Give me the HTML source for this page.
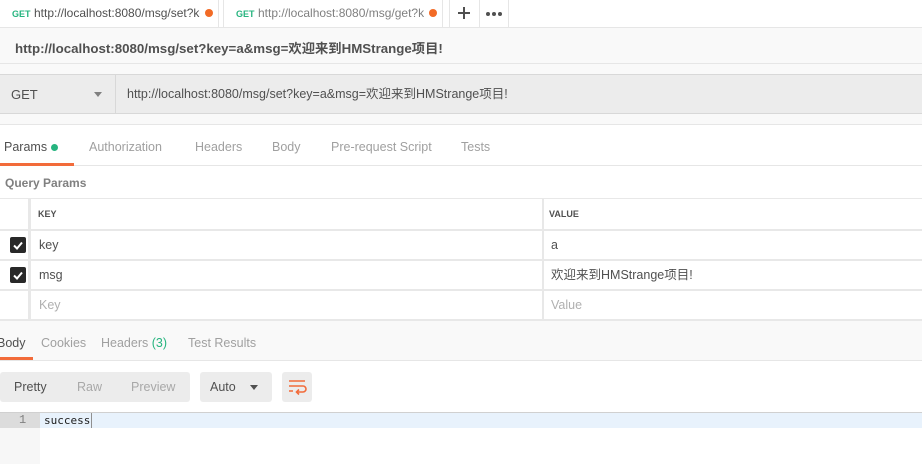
<!DOCTYPE html>
<html><head><meta charset="utf-8"><style>
*{margin:0;padding:0;box-sizing:border-box}
body{width:922px;height:464px;overflow:hidden;background:#fff;font-family:"Liberation Sans","Noto Sans CJK SC",sans-serif;font-size:12px;color:#505050;position:relative}
.a{position:absolute;line-height:15px}
.t{white-space:nowrap}
</style></head><body>
<div class="a" style="left:0;top:0;width:922px;height:28px;background:#fff;border-bottom:1px solid #e6e6e6"></div>
<div class="a" style="left:218px;top:0;width:1px;height:27px;background:#e6e6e6"></div>
<div class="a" style="left:223px;top:0;width:220px;height:27px;border-left:1px solid #e6e6e6;border-right:1px solid #e6e6e6"></div>
<div class="a" style="left:449px;top:0;width:60px;height:27px;border-left:1px solid #e6e6e6;border-right:1px solid #e6e6e6"></div>
<div class="a" style="left:479px;top:0;width:1px;height:27px;background:#e6e6e6"></div>
<div class="a t" style="left:12px;top:7px;font-size:9px;font-weight:bold;color:#26b47f">GET</div>
<div class="a t" style="left:34px;top:6px;width:166px;overflow:hidden;font-size:12px;color:#505050">http://localhost:8080/msg/set?key</div>
<div class="a" style="left:205px;top:9px;width:8px;height:8px;border-radius:50%;background:#f26b26"></div>
<div class="a t" style="left:236px;top:7px;font-size:9px;font-weight:bold;color:#26b47f">GET</div>
<div class="a t" style="left:258px;top:6px;width:166px;overflow:hidden;font-size:12px;color:#808080">http://localhost:8080/msg/get?key</div>
<div class="a" style="left:429px;top:9px;width:8px;height:8px;border-radius:50%;background:#f26b26"></div>
<div class="a" style="left:458px;top:12px;width:12px;height:2px;background:#505050"></div>
<div class="a" style="left:463px;top:7px;width:2px;height:12px;background:#505050"></div>
<div class="a" style="left:486px;top:12px;width:4px;height:4px;border-radius:50%;background:#505050"></div>
<div class="a" style="left:492px;top:12px;width:4px;height:4px;border-radius:50%;background:#505050"></div>
<div class="a" style="left:498px;top:12px;width:4px;height:4px;border-radius:50%;background:#505050"></div>
<div class="a" style="left:0;top:28px;width:922px;height:97px;background:#f9f9f9"></div>
<div class="a" style="left:0;top:63px;width:922px;height:1px;background:#e6e6e6"></div>
<div class="a t" style="left:15px;top:41px;font-size:13.3px;font-weight:bold;color:#505050">http://localhost:8080/msg/set?key=a&amp;msg=欢迎来到HMStrange项目!</div>
<div class="a" style="left:0;top:74px;width:922px;height:40px;background:#ececec;border-top:1px solid #d8d8d8;border-bottom:1px solid #d8d8d8"></div>
<div class="a" style="left:115px;top:75px;width:1px;height:38px;background:#d8d8d8"></div>
<div class="a t" style="left:11px;top:87px;font-size:13px;color:#505050">GET</div>
<div class="a" style="left:94px;top:92px;width:0;height:0;border-left:4px solid transparent;border-right:4px solid transparent;border-top:5px solid #808080"></div>
<div class="a t" style="left:127px;top:87px;font-size:12.5px;color:#505050">http://localhost:8080/msg/set?key=a&amp;msg=欢迎来到HMStrange项目!</div>
<div class="a" style="left:0;top:124px;width:922px;height:1px;background:#e6e6e6"></div>
<div class="a" style="left:0;top:165px;width:922px;height:1px;background:#e6e6e6"></div>
<div class="a" style="left:0;top:163px;width:74px;height:3px;background:#f26b3a"></div>
<div class="a t" style="left:4px;top:140px;font-size:12.5px;color:#505050">Params</div>
<div class="a" style="left:51px;top:144px;width:7px;height:7px;border-radius:50%;background:#26b47f"></div>
<div class="a t" style="left:89px;top:140px;font-size:12.5px;color:#a0a0a0">Authorization</div>
<div class="a t" style="left:195px;top:140px;font-size:12.5px;color:#a0a0a0">Headers</div>
<div class="a t" style="left:272px;top:140px;font-size:12.5px;color:#a0a0a0">Body</div>
<div class="a t" style="left:331px;top:140px;font-size:12.5px;color:#a0a0a0">Pre-request Script</div>
<div class="a t" style="left:461px;top:140px;font-size:12.5px;color:#a0a0a0">Tests</div>
<div class="a t" style="left:5px;top:176px;font-size:12px;font-weight:bold;color:#808080">Query Params</div>
<div class="a" style="left:0;top:198px;width:922px;height:1px;background:#e8e8e8"></div>
<div class="a" style="left:0;top:229px;width:922px;height:2px;background:#e8e8e8"></div>
<div class="a" style="left:0;top:259px;width:922px;height:2px;background:#e8e8e8"></div>
<div class="a" style="left:0;top:289px;width:922px;height:2px;background:#e8e8e8"></div>
<div class="a" style="left:0;top:319px;width:922px;height:2px;background:#e8e8e8"></div>
<div class="a" style="left:28px;top:198px;width:3px;height:122px;background:#e8e8e8"></div>
<div class="a" style="left:542px;top:198px;width:2px;height:122px;background:#e8e8e8"></div>
<div class="a t" style="left:38px;top:207px;font-size:9px;font-weight:bold;color:#505050">KEY</div>
<div class="a t" style="left:549px;top:207px;font-size:9px;font-weight:bold;color:#505050">VALUE</div>
<div class="a" style="left:10px;top:237px;width:16px;height:16px;border-radius:2px;background:#282828"></div>
<div class="a" style="left:10px;top:267px;width:16px;height:16px;border-radius:2px;background:#282828"></div>
<svg class="a" style="left:10px;top:237px" width="16" height="16"><path d="M4 8.5l3 3 5-6" stroke="#fff" stroke-width="2" fill="none"/></svg>
<svg class="a" style="left:10px;top:267px" width="16" height="16"><path d="M4 8.5l3 3 5-6" stroke="#fff" stroke-width="2" fill="none"/></svg>
<div class="a t" style="left:39px;top:238px;font-size:12.5px;color:#505050">key</div>
<div class="a t" style="left:39px;top:268px;font-size:12.5px;color:#505050">msg</div>
<div class="a t" style="left:39px;top:298px;font-size:12.5px;color:#b0b0b0">Key</div>
<div class="a t" style="left:551px;top:238px;font-size:12.5px;color:#505050">a</div>
<div class="a t" style="left:551px;top:268px;font-size:12.5px;color:#505050">欢迎来到HMStrange项目!</div>
<div class="a t" style="left:551px;top:298px;font-size:12.5px;color:#b0b0b0">Value</div>
<div class="a" style="left:0;top:321px;width:922px;height:40px;background:#f9f9f9;border-bottom:1px solid #e6e6e6"></div>
<div class="a" style="left:0;top:357px;width:33px;height:3px;background:#f26b3a"></div>
<div class="a t" style="left:-3px;top:336px;font-size:12.5px;color:#505050">Body</div>
<div class="a t" style="left:41px;top:336px;font-size:12.5px;color:#a0a0a0">Cookies</div>
<div class="a t" style="left:101px;top:336px;font-size:12.5px;color:#a0a0a0">Headers <span style="color:#26b47f">(3)</span></div>
<div class="a t" style="left:188px;top:336px;font-size:12.5px;color:#a0a0a0">Test Results</div>
<div class="a" style="left:0;top:372px;width:190px;height:30px;background:#ececec;border-radius:3px"></div>
<div class="a t" style="left:14px;top:380px;font-size:12.5px;color:#505050">Pretty</div>
<div class="a t" style="left:77px;top:380px;font-size:12.5px;color:#a8a8a8">Raw</div>
<div class="a t" style="left:131px;top:380px;font-size:12.5px;color:#a8a8a8">Preview</div>
<div class="a" style="left:200px;top:372px;width:72px;height:30px;background:#ececec;border-radius:3px"></div>
<div class="a t" style="left:210px;top:380px;font-size:12.5px;color:#505050">Auto</div>
<div class="a" style="left:250px;top:385px;width:0;height:0;border-left:4px solid transparent;border-right:4px solid transparent;border-top:5px solid #505050"></div>
<div class="a" style="left:282px;top:372px;width:30px;height:30px;background:#ececec;border-radius:3px"></div>
<svg class="a" style="left:282px;top:372px" width="30" height="30"><path d="M7 9h16M7 14h14a3 3 0 0 1 0 6h-6M7 19h4M17 17.5l-2.5 2.5 2.5 2.5" stroke="#f26b3a" stroke-width="1.6" fill="none"/></svg>
<div class="a" style="left:0;top:412px;width:922px;height:1px;background:#d0d0d0"></div>
<div class="a" style="left:0;top:413px;width:40px;height:51px;background:#f7f7f7"></div>
<div class="a" style="left:0;top:413px;width:40px;height:15px;background:#dcdcdc"></div>
<div class="a" style="left:40px;top:413px;width:882px;height:15px;background:#e8f2fc"></div>
<div class="a t" style="left:19px;top:413px;font-family:'Liberation Mono',monospace;font-size:12px;color:#808080">1</div>
<div class="a t" style="left:44px;top:413px;font-family:'DejaVu Sans Mono','Liberation Mono',monospace;font-size:11px;color:#202020">success</div>
<div class="a" style="left:91px;top:413px;width:1px;height:15px;background:#909090"></div>
</body></html>
